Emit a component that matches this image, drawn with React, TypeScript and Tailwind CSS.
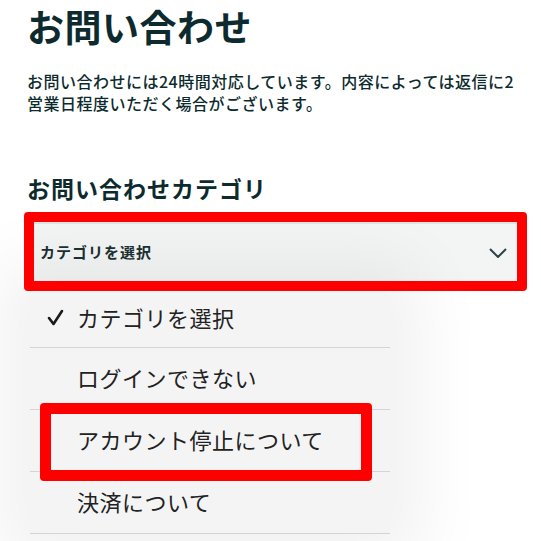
const menuItems = ["カテゴリを選択", "ログインできない", "アカウント停止について", "決済について"];

export default function App() {
  return (
    <div className="relative w-[541px] h-[541px] overflow-hidden bg-white font-['Noto_Sans_CJK_JP','Noto_Sans',sans-serif]">
      <div className="pl-[27px] pt-[4px]">
        {/* Heading */}
        <h1 className="text-[37px] leading-[44px] font-bold tracking-[0.5px] text-[#0d2b2e]">お問い合わせ</h1>
        <p className="mt-[22px] w-[492px] text-[16px] leading-[22px] font-medium tracking-[0.5px] text-[#0d2b2e]">
          お問い合わせには24時間対応しています。内容によっては返信に2営業日程度いただく場合がございます。
        </p>

        {/* Category */}
        <h2 className="mt-[59px] text-[23px] leading-[30px] font-bold tracking-[1px] text-[#0d2b2e]">お問い合わせカテゴリ</h2>
        <div className="mt-[19px] ml-[7px] w-[483px] h-[59px] bg-[#f3f4f4] border-t-2 border-[#dfe5e5] flex items-center justify-between pl-[6px] pr-[10px]">
          <span className="text-[15px] font-bold tracking-[1px] text-[#1c3032]">カテゴリを選択</span>
          <svg className="w-[18px] h-[10px]" viewBox="0 0 18 10" fill="none" stroke="#2c4446" strokeWidth={2}>
            <path d="M1 1l8 8 8-8" />
          </svg>
        </div>
      </div>

      {/* Open dropdown menu */}
      <div className="absolute left-[30px] top-[292px] w-[360px] bg-[#f4f4f5] rounded-t-[8px] shadow-[0_0_70px_30px_rgba(0,0,0,0.06)]">
        {menuItems.map((item, i) => (
          <div
            key={i}
            className={`flex items-center pl-[17px] border-b border-[#d4d4d6] ${i === 0 ? "h-[56px] pb-[5px]" : "h-[62px] pb-[2px]"}`}
          >
            <span className="w-[30px] flex">
              {i === 0 && (
                <svg className="w-[17px] h-[17px]" viewBox="0 0 17 17" fill="none" stroke="#1a1a1a" strokeWidth={2.6} strokeLinecap="round" strokeLinejoin="round">
                  <path d="M2 9l4.5 6L15 2" />
                </svg>
              )}
            </span>
            <span className="text-[22px] tracking-[0.5px] text-[#222]">{item}</span>
          </div>
        ))}
      </div>

      {/* Annotation boxes */}
      <div className="absolute left-[24px] top-[212px] w-[503px] h-[79px] border-[10px] border-[#ff0000] rounded-[4px]"></div>
      <div className="absolute left-[40px] top-[403px] w-[332px] h-[78px] border-[11px] border-[#ff0000] rounded-[4px]"></div>
    </div>
  );
}
